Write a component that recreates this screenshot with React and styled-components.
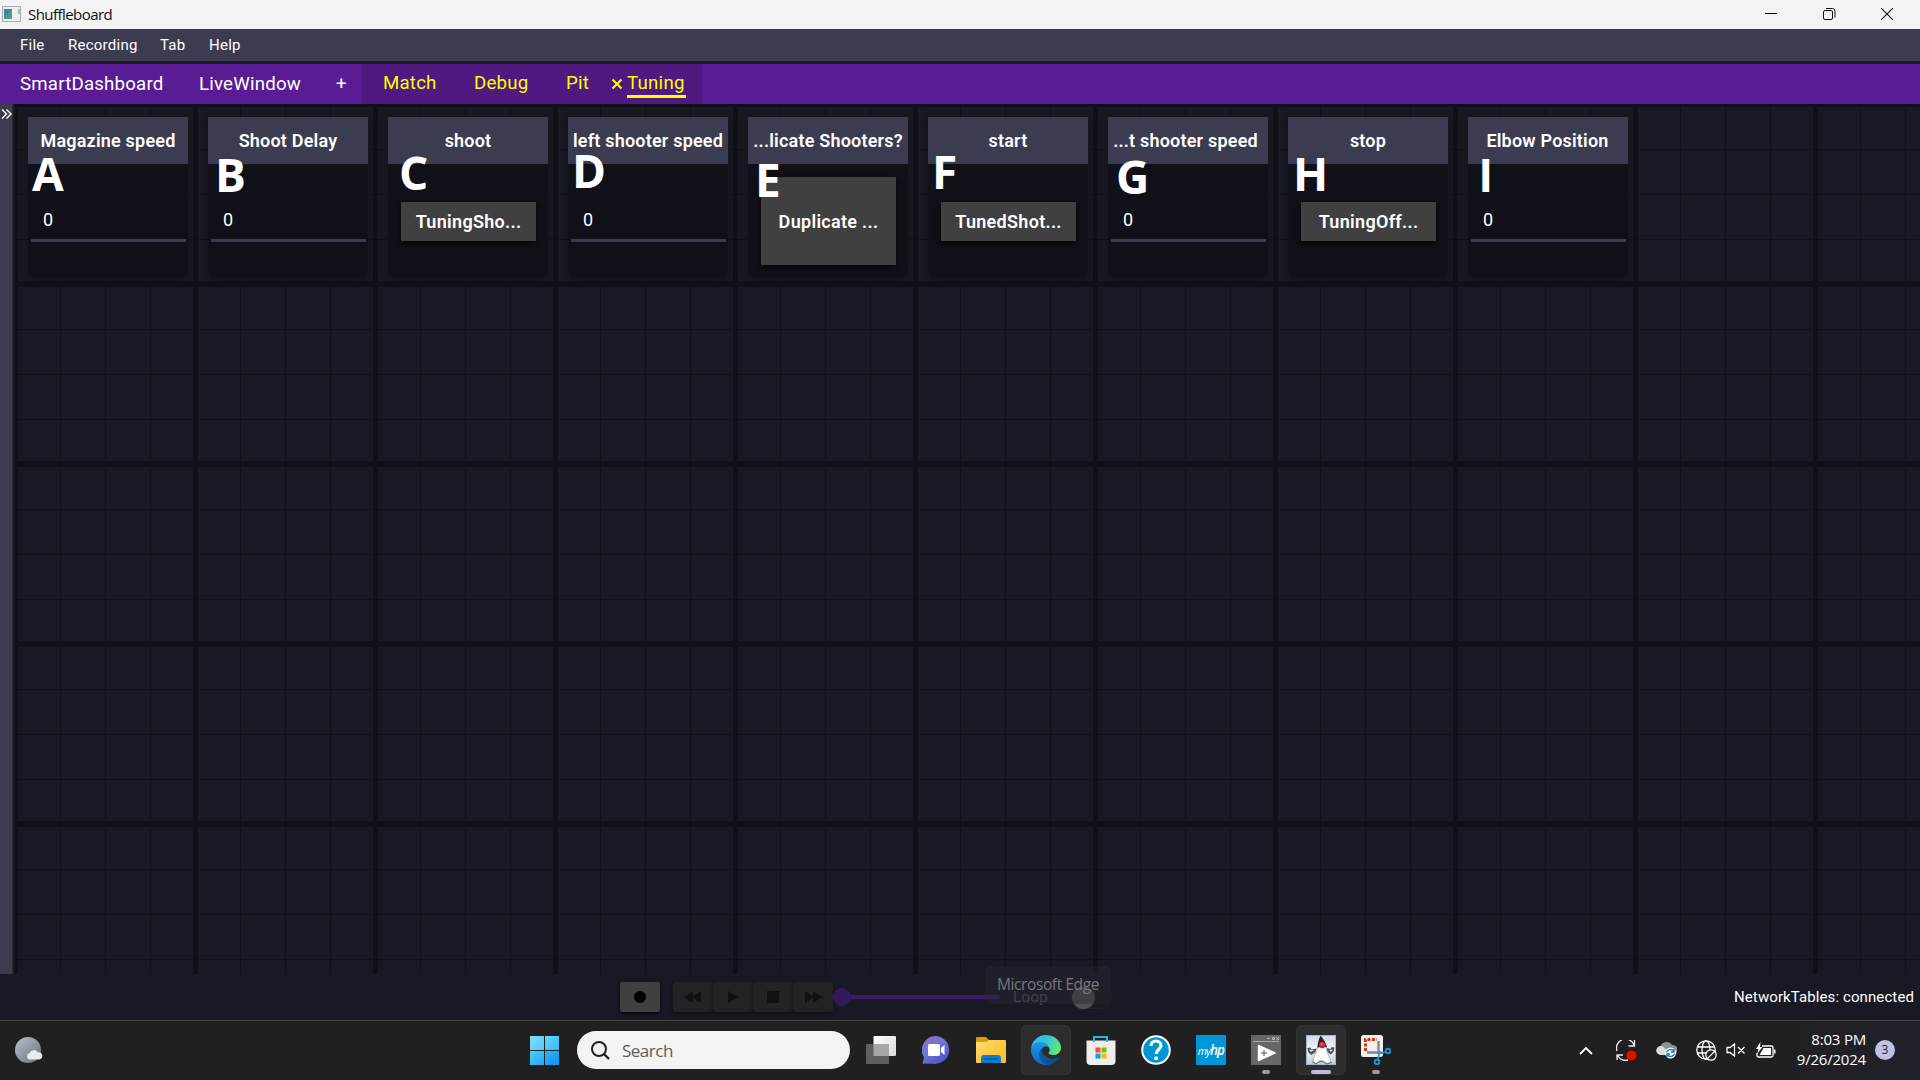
import React from 'react';
import styled, { createGlobalStyle } from 'styled-components';

const GlobalStyle = createGlobalStyle`
  * { box-sizing: border-box; }
  body { margin: 0; background: #191924; overflow: hidden; }
`;

const roboto = `Roboto, "Liberation Sans", sans-serif`;
const system = `"Open Sans", "Noto Sans", sans-serif`;

const Screen = styled.div`
  width: 1920px;
  height: 1080px;
  display: flex;
  flex-direction: column;
  overflow: hidden;
  background: #191924;
  color: #fff;
  font-family: ${roboto};
  white-space: nowrap;
`;

const TitleBar = styled.header`
  height: 29px;
  flex: none;
  display: flex;
  align-items: center;
  background: #f3f3f3;
  color: #111;
  padding: 0 4px 1px 2px;
`;
const WindowTitle = styled.span`
  flex: 1;
  margin-left: 7px;
  font: 15px/29px ${system};
  letter-spacing: -0.55px;
`;
const WindowButton = styled.span`
  width: 58px;
  height: 28px;
  display: grid;
  place-items: center;
`;

const MenuBar = styled.nav`
  height: 35px;
  flex: none;
  display: flex;
  gap: 24px;
  padding-left: 20px;
  background: #3c3c50;
  border-bottom: 3px solid #1c1b27;
`;
const MenuItem = styled.span`
  width: ${(p) => p.$w}px;
  font-size: 15px;
  line-height: 32px;
  letter-spacing: 0.25px;
`;

const TabBar = styled.nav`
  height: 40px;
  flex: none;
  display: flex;
  background: #591c94;
  font-size: 18.67px;
  line-height: 41px;
`;
const Tab = styled.span`
  width: ${(p) => p.$w}px;
  padding-left: ${(p) => p.$pad || 0}px;
  letter-spacing: 0.2px;
`;
const CustomTabs = styled.div`
  width: 340px;
  display: flex;
  background: #4f1980;
  color: #ff0;
  line-height: 39px;
`;
const CloseMark = styled.svg`
  margin: 14px 4px 0 0;
  flex: none;
`;
const ActiveTab = styled.span`
  height: 34px;
  width: 59px;
  border-bottom: 3px solid #ff0;
  letter-spacing: 0.25px;
`;

const Workspace = styled.main`
  height: 870px;
  flex: none;
  display: flex;
`;
const Sidebar = styled.aside`
  width: 15px;
  flex: none;
  background: #3c3c50;
  border-right: 2px solid #191924;
  box-shadow: inset -1px 0 #2b2a3a;
  padding: 4px 0 0 1px;
  svg { display: block; }
`;
const Board = styled.section`
  flex: 1;
  padding: 13px 0 0 13px;
  display: flex;
  align-items: flex-start;
  gap: 20px;
  border-top: 0;
  background:
    repeating-linear-gradient(90deg, #101018 0 3px, transparent 3px 178px, #101018 178px 180px),
    repeating-linear-gradient(180deg, #101018 0 3px, transparent 3px 177px, #101018 177px 180px),
    repeating-linear-gradient(90deg, transparent 0 45px, #111119 45px 46px, transparent 46px 90px, #111119 90px 91px, transparent 91px 135px, #111119 135px 136px, transparent 136px 180px),
    repeating-linear-gradient(180deg, transparent 0 45px, #111119 45px 46px, transparent 46px 90px, #111119 90px 91px, transparent 91px 135px, #111119 135px 136px, transparent 136px 180px),
    #191924;
`;

const Tile = styled.article`
  position: relative;
  width: 160px;
  height: 160px;
  flex: none;
  display: flex;
  flex-direction: column;
  border-radius: 0 0 6px 6px;
  background: #101018;
  box-shadow: 0 2px 6px rgba(16, 16, 18, 0.85);
`;
const TileTitle = styled.h2`
  margin: 0;
  height: 47px;
  padding-right: ${(p) => p.$shift || 0}px;
  background: #3c3c50;
  text-align: center;
  font-size: 18px;
  font-weight: 600;
  line-height: 47px;
  letter-spacing: 0.2px;
`;
const TileBody = styled.div`
  flex: 1;
  display: flex;
  padding: 13px 13px 12px;
  align-items: center;
`;
const NumberField = styled.div`
  width: 155px;
  height: 46px;
  align-self: flex-start;
  margin: 19px -11px 0 -10px;
  flex: none;
  padding: 10px 0 0 12px;
  border-bottom: 3px solid #3c3c50;
  font-size: 18px;
  line-height: 27px;
`;
const CommandButton = styled.button`
  width: 135px;
  height: ${(p) => (p.$tall ? 88 : 39)}px;
  margin-top: ${(p) => (p.$tall ? 0 : 1)}px;
  flex: none;
  padding: 1px 0 0;
  border: 0;
  background: #404040;
  color: #fff;
  box-shadow: 0 2px 6px rgba(0, 0, 0, 0.8);
  font: 600 18px/1 ${roboto};
  letter-spacing: 0.3px;
`;
const Marker = styled.span`
  position: absolute;
  left: ${(p) => p.$x}px;
  top: ${(p) => p.$y}px;
  font: 700 46px/50px ${(p) => (p.$plain ? roboto : system)};
`;

const PlaybackBar = styled.footer`
  height: 47px;
  flex: none;
  display: flex;
  align-items: center;
  padding: 0 6px 0 620px;
  border-bottom: 1px solid #48484c;
`;
const MediaButton = styled.span`
  width: 40px;
  height: 30px;
  display: grid;
  place-items: center;
  background: ${(p) => (p.$active ? '#404040' : '#222227')};
  margin-right: ${(p) => (p.$active ? 13 : 0)}px;
  border-radius: 2px;
  box-shadow: 0 2px 4px rgba(0, 0, 0, ${(p) => (p.$active ? 0.7 : 0.35)});
`;
const Timeline = styled.div`
  width: 167px;
  display: flex;
  align-items: center;
`;
const Knob = styled.i`
  width: 18px;
  height: 18px;
  border-radius: 50%;
  background: #34195a;
`;
const Track = styled.i`
  flex: 1;
  height: 4px;
  border-radius: 0 2px 2px 0;
  background: #3d1c67;
`;
const LoopArea = styled.div`
  position: relative;
  flex: 1;
  display: flex;
  align-items: center;
  padding-left: 13px;
`;
const LoopLabel = styled.span`
  width: 57px;
  color: #54545b;
  font-size: 15.5px;
`;
const Toggle = styled.i`
  width: 42px;
  height: 24px;
  border-radius: 12px;
  border: 1px solid #23232c;
  background: #191920;
  display: flex;
  align-items: center;
  padding-left: 1px;
  &::before {
    content: '';
    width: 23px;
    height: 23px;
    flex: none;
    border-radius: 50%;
    background: #505054;
  }
`;
const Tooltip = styled.span`
  position: absolute;
  left: -15px;
  top: -19px;
  width: 126px;
  height: 38px;
  border-radius: 5px;
  background: rgba(40, 40, 48, 0.45);
  color: #77777e;
  text-align: center;
  font: 15.5px/37px ${system};
  letter-spacing: -0.4px;
`;
const Status = styled.span`
  font-size: 15px;
  letter-spacing: 0.1px;
`;

const Taskbar = styled.footer`
  height: 59px;
  flex: none;
  display: flex;
  align-items: center;
  padding-bottom: 1px;
  background: linear-gradient(90deg, #202020 0 89%, #20202a);
  font-family: ${system};
`;
const Weather = styled.div`
  width: 515px;
  padding-left: 15px;
  display: flex;
`;
const Start = styled.div`
  width: 29px;
  height: 29px;
  margin: 0 18px 0 15px;
  display: grid;
  grid-template-columns: 14px 14px;
  grid-template-rows: 14px 14px;
  gap: 1px;
`;
const Pane = styled.i`
  background: linear-gradient(135deg, ${(p) => p.$from}, ${(p) => p.$to});
`;
const SearchBox = styled.div`
  width: 273px;
  height: 38px;
  border-radius: 19px;
  background: #f3f3f3;
  display: flex;
  align-items: center;
  padding-left: 14px;
  gap: 12px;
  color: #5c5c5c;
  font-size: 17px;
  letter-spacing: -0.5px;
`;
const Apps = styled.div`
  display: flex;
  gap: 5px;
  margin-left: 6px;
`;
const AppSlot = styled.div`
  position: relative;
  width: 50px;
  height: 50px;
  display: grid;
  place-items: center;
  border-radius: 6px;
  background: ${(p) => (p.$lit ? '#2d2d2d' : 'transparent')};
  box-shadow: ${(p) => (p.$lit ? 'inset 0 0 0 1px #323232' : 'none')};
`;
const Running = styled.i`
  position: absolute;
  bottom: 1px;
  left: ${(p) => 25 - p.$w / 2}px;
  width: ${(p) => p.$w}px;
  height: 4px;
  border-radius: 2px;
  background: ${(p) => p.$color};
`;
const HpTile = styled.span`
  width: 30px;
  height: 30px;
  background: #0096d6;
  border-radius: 1px;
  text-align: center;
  font: italic 10.5px/30px ${system};
  letter-spacing: -0.9px;
  b { font-size: 13.5px; font-weight: 600; }
`;
const Tray = styled.div`
  flex: 1;
  display: flex;
  align-items: center;
  justify-content: flex-end;
  padding-right: 25px;
`;
const TrayIcon = styled.svg`
  flex: none;
  margin-right: ${(p) => p.$gap}px;
`;
const Clock = styled.div`
  width: 80px;
  margin-right: 9px;
  padding-bottom: 2px;
  text-align: right;
  font-size: 15px;
  line-height: 20px;
  letter-spacing: -0.2px;
`;
const Count = styled.span`
  width: 20px;
  height: 20px;
  border-radius: 50%;
  background: #c0bfe4;
  color: #222;
  text-align: center;
  font-size: 12px;
  line-height: 20px;
`;

const tiles = [
  { title: 'Magazine speed', mark: 'A', x: 4, y: 31 },
  { title: 'Shoot Delay', mark: 'B', x: 7, y: 32 },
  { title: 'shoot', mark: 'C', x: 11, y: 30, command: 'TuningSho...' },
  { title: 'left shooter speed', mark: 'D', x: 4, y: 28 },
  { title: '...licate Shooters?', mark: 'E', x: 7, y: 37, command: 'Duplicate ...', tall: true },
  { title: 'start', mark: 'F', x: 4, y: 29, command: 'TunedShot...' },
  { title: '...t shooter speed', mark: 'G', x: 8, y: 34, shift: 5 },
  { title: 'stop', mark: 'H', x: 5, y: 31, command: 'TuningOff...' },
  { title: 'Elbow Position', mark: 'I', x: 11, y: 34, plain: true, shift: 1 },
];

const AppFileIcon = () => (
  <svg width="19" height="16" viewBox="0 0 19 16">
    <rect x=".5" y=".5" width="18" height="15" fill="#eee" stroke="#a9adaf" />
    <rect x="2" y="3" width="8" height="10" fill="#4b9b86" />
    <path d="M2 3h8L2 11z" fill="#417fa0" />
    <path d="M17 3v5" stroke="#4b9b86" />
  </svg>
);

const WeatherIcon = () => (
  <svg width="28" height="27" viewBox="0 0 28 27">
    <defs>
      <linearGradient id="moon" x2="1" y2="1"><stop stopColor="#b7c1cb" /><stop offset="1" stopColor="#69737d" /></linearGradient>
    </defs>
    <circle cx="13" cy="13" r="13" fill="url(#moon)" />
    <path d="M14.500 22.500a3.200 3.200 0 0 1 0-6.200 4.600 4.600 0 0 1 8.300-1 3.700 3.700 0 0 1 1.700 7.200z" fill="#e9edf0" />
  </svg>
);

const TaskViewIcon = () => (
  <svg width="30" height="28" viewBox="0 0 30 28">
    <defs><linearGradient id="tv" x2="1" y2="1"><stop stopColor="#fff" /><stop offset="1" stopColor="#d8d8d8" /></linearGradient></defs>
    <rect x="7.500" y="0" width="22.500" height="20" rx="1" fill="url(#tv)" />
    <rect x="0" y="8" width="23" height="20" rx="1" fill="#5f5f5f" />
    <path d="M7.500 8H23v12H7.500z" fill="#a6a6a6" />
  </svg>
);

const ChatIcon = () => (
  <svg width="28" height="28" viewBox="0 0 28 28">
    <defs><linearGradient id="chat" x2=".7" y2="1"><stop stopColor="#9a6aa8" /><stop offset=".45" stopColor="#7378d4" /><stop offset="1" stopColor="#4f52c8" /></linearGradient></defs>
    <path d="M14 0a14 14 0 1 1-3 27.800H0.400L2 21.500A14 14 0 0 1 14 0z" fill="url(#chat)" />
    <rect x="6" y="8" width="12" height="12" rx="1.500" fill="#fff" />
    <path d="M19 12l3.500-3v10L19 16z" fill="#fff" />
  </svg>
);

const FolderIcon = () => (
  <svg width="30" height="28" viewBox="0 0 30 28">
    <defs><linearGradient id="fold" x2="1" y2="1"><stop stopColor="#ffdd70" /><stop offset="1" stopColor="#fbb91d" /></linearGradient></defs>
    <path d="M0 2a1 1 0 0 1 1-1h9l3 3h16v6H0z" fill="#d99a08" />
    <path d="M0 6h10l3-2h16a1 1 0 0 1 1 1v21a1 1 0 0 1-1 1H1a1 1 0 0 1-1-1z" fill="url(#fold)" />
    <path d="M5 27v-5a3 3 0 0 1 3-3h14a3 3 0 0 1 3 3v5z" fill="#0f7ad0" />
    <path d="M8.500 23h13" stroke="#094c8d" strokeWidth="1.200" />
  </svg>
);

const EdgeIcon = () => (
  <svg width="30" height="30" viewBox="0 0 256 256">
    <defs>
      <linearGradient id="e1" x1="0" x2="1" y1=".5" y2=".5"><stop stopColor="#0c59a4" /><stop offset="1" stopColor="#114a8b" /></linearGradient>
      <linearGradient id="e2" x1=".5" x2=".4" y1="0" y2="1"><stop stopColor="#1b9de2" /><stop offset="1" stopColor="#0a6bd0" /></linearGradient>
      <linearGradient id="e3" x1="0" x2="1" y1=".3" y2=".6"><stop stopColor="#35b6ef" /><stop offset=".5" stopColor="#37c6cf" /><stop offset="1" stopColor="#66eb6e" /></linearGradient>
    </defs>
    <path fill="url(#e1)" d="M231 190.500c-3.400 1.800-6.900 3.400-10.500 4.700a101.900 101.900 0 0 1-35.900 6.400c-47.300 0-88.500-32.500-88.500-74.300a31.500 31.500 0 0 1 16.400-27.300c-42.800 1.800-53.800 46.400-53.800 72.500 0 73.900 68.100 81.400 82.800 81.400 7.900 0 19.800-2.300 27-4.600l1.300-.4a128.300 128.300 0 0 0 66.600-52.800 4 4 0 0 0-5.400-5.600z" />
    <path fill="url(#e2)" d="M105.700 241.400a79.200 79.200 0 0 1-22.700-21.300 80.700 80.700 0 0 1 29.500-120c3.200-1.500 8.500-4.200 15.600-4.100a32.400 32.400 0 0 1 25.700 13 31.900 31.900 0 0 1 6.300 18.700c0-.2 24.500-79.600-80-79.600-43.900 0-80 41.700-80 78.200a130.200 130.200 0 0 0 12.100 56 128 128 0 0 0 156.400 67 75.500 75.500 0 0 1-62.800-8z" />
    <path fill="url(#e3)" d="M152.300 148.900c-.8 1-3.300 2.500-3.300 5.700 0 2.600 1.700 5.100 4.700 7.200 14.400 10 41.500 8.700 41.600 8.700a59.600 59.600 0 0 0 30.300-8.300 61.400 61.400 0 0 0 30.400-52.900c.3-22.400-8-37.300-11.300-43.900C223.500 23.900 177.700 0 128 0A128 128 0 0 0 0 126.200c.5-36.500 36.800-66 80-66 3.500 0 23.500.3 42 10a72.600 72.600 0 0 1 30.900 29.300c6.100 10.600 7.200 24.100 7.200 29.500s-2.700 13.300-7.800 19.900z" />
  </svg>
);

const StoreIcon = () => (
  <svg width="30" height="30" viewBox="0 0 30 30">
    <path d="M8 7V2h13v5" fill="none" stroke="#28b4f4" strokeWidth="2" />
    <path d="M.5 5.500h29V26a4 4 0 0 1-4 4h-21a4 4 0 0 1-4-4z" fill="#ededed" />
    <path d="M8 7V2h13v5" fill="none" stroke="#28b4f4" strokeWidth="2" />
    <path d="M9.500 12.500h5v5h-5z" fill="#f35325" /><path d="M15.500 12.500h5v5h-5z" fill="#81bc06" />
    <path d="M9.500 18.500h5v5h-5z" fill="#05a6f0" /><path d="M15.500 18.500h5v5h-5z" fill="#ffba08" />
  </svg>
);

const HelpIcon = () => (
  <svg width="30" height="30" viewBox="0 0 30 30">
    <circle cx="15" cy="15" r="13.800" fill="#0096d6" stroke="#fff" strokeWidth="2" />
    <path d="M10 11c0-3 2.200-5 5-5s5 2 5 4.600c0 3.600-4.700 3.900-4.700 8.400" fill="none" stroke="#fff" strokeWidth="3.200" />
    <circle cx="15.200" cy="23.300" r="2" fill="#fff" />
  </svg>
);

const PlayerIcon = () => (
  <svg width="30" height="30" viewBox="0 0 30 30">
    <path d="M0 0h30v30H0z" fill="#666867" />
    <path d="M2 6.500h26" stroke="#aaa" />
    <path d="M16 3.500h3M21.500 2.500h2v2h-2zM25.500 2l2.500 3M28 2l-2.500 3" stroke="#ccc" strokeWidth=".8" fill="none" />
    <path d="M7.500 10.500v15L24 18z" fill="#fff" stroke="#fff" strokeWidth="1.500" strokeLinejoin="round" />
    <path d="M13 15v6M10 18h6" stroke="#555" />
  </svg>
);

const DukeIcon = () => (
  <svg width="30" height="30" viewBox="0 0 30 30">
    <defs><linearGradient id="duke" x2="0" y2="1"><stop stopColor="#d3dae6" /><stop offset=".5" stopColor="#f2f3f5" /><stop offset="1" stopColor="#c9cbd0" /></linearGradient></defs>
    <path d="M0 0h30v30H0z" fill="url(#duke)" />
    <path d="M.5 .5h29v29H.5z" fill="none" stroke="#9db6d2" />
    <path d="M1.500 13l3-.5 1 2 5-1-1 3.500-4 3c-2-1-4-3-4-7zM28.500 12.500l-3-.5-1 2-4-1 1 4 3 2.500c2-1 4-3 4-7z" fill="#50545c" />
    <path d="M3 14.500l5 .5-3 2zM27 14.500l-4 .5 2 2z" fill="#d0d2d4" />
    <path d="M11.500 12c-.5 5-4 9-4.500 14l3 2.500 4-3 3 .5 4 2.500 4-1.500c-1.500-5-4-9-5-15z" fill="#fafaf8" stroke="#8b8d90" strokeWidth=".6" />
    <path d="M6 27l4 1.800 4-2.300 3 .3 4 2.200 5-1.500" stroke="#6c6f74" fill="none" />
    <path d="M14.500 .8c2.200 2 5.500 6.500 6.500 11.700-2.500-1.500-6.500-1.300-9.500.3 0-4 1.200-9 3-12z" fill="#25252b" />
    <circle cx="16.200" cy="10" r="3.200" fill="#cf2b2c" />
    <circle cx="15.500" cy="9" r="1" fill="#f07070" />
  </svg>
);

const SnipIcon = () => (
  <svg width="30" height="30" viewBox="0 0 30 30">
    <rect width="22" height="22" rx="2.500" fill="#f0f0f0" />
    <path d="M4.500 16V4.500H16" fill="none" stroke="#d13b13" strokeWidth="3" strokeDasharray="3 1.500" />
    <path d="M17.500 6v13M6 17.500h15" stroke="#7e8890" strokeWidth="2.400" />
    <circle cx="27" cy="16" r="2.300" fill="none" stroke="#1b94dc" strokeWidth="1.900" />
    <circle cx="16" cy="27" r="2.300" fill="none" stroke="#1b94dc" strokeWidth="1.900" />
    <path d="M19 18.500l6-1.500M18 19l-1 6" stroke="#1b94dc" strokeWidth="1.700" />
  </svg>
);

export default function App() {
  return (
    <Screen>
      <GlobalStyle />
      <TitleBar>
        <AppFileIcon />
        <WindowTitle>Shuffleboard</WindowTitle>
        <WindowButton><svg width="12" height="12"><path d="M0 5.500h12" stroke="#000" /></svg></WindowButton>
        <WindowButton>
          <svg width="13" height="13" fill="none" stroke="#111">
            <rect x=".5" y="2.500" width="9" height="9" rx="1.500" /><path d="M3 .5h6.500a2.500 2.500 0 0 1 2.500 2.500v6.500" />
          </svg>
        </WindowButton>
        <WindowButton><svg width="12" height="12"><path d="M0 0l12 12M12 0L0 12" stroke="#111" strokeWidth="1.100" /></svg></WindowButton>
      </TitleBar>

      <MenuBar>
        <MenuItem $w={24}>File</MenuItem>
        <MenuItem $w={68}>Recording</MenuItem>
        <MenuItem $w={25}>Tab</MenuItem>
        <MenuItem $w={40}>Help</MenuItem>
      </MenuBar>

      <TabBar>
        <Tab $w={199} $pad={20}>SmartDashboard</Tab>
        <Tab $w={137}>LiveWindow</Tab>
        <Tab $w={26}>+</Tab>
        <CustomTabs>
          <Tab $w={112} $pad={21}>Match</Tab>
          <Tab $w={92}>Debug</Tab>
          <Tab $w={45}>Pit</Tab>
          <CloseMark width="12" height="12"><path d="M1.500 1.500l9 9M10.500 1.500l-9 9" stroke="#ff0" strokeWidth="2" /></CloseMark>
          <ActiveTab>Tuning</ActiveTab>
        </CustomTabs>
      </TabBar>

      <Workspace>
        <Sidebar>
          <svg width="11" height="12" fill="none" stroke="#fff" strokeWidth="1.400"><path d="M1 1.500L5.500 6 1 10.500M5.500 1.500L10 6l-4.500 4.500" /></svg>
        </Sidebar>
        <Board>
          {tiles.map((t) => (
            <Tile key={t.mark}>
              <TileTitle $shift={t.shift}>{t.title}</TileTitle>
              <TileBody>
                {t.command ? <CommandButton $tall={t.tall}>{t.command}</CommandButton> : <NumberField>0</NumberField>}
              </TileBody>
              <Marker $x={t.x} $y={t.y} $plain={t.plain}>{t.mark}</Marker>
            </Tile>
          ))}
        </Board>
      </Workspace>

      <PlaybackBar>
        <MediaButton $active><svg width="14" height="14"><circle cx="7" cy="7" r="6" fill="#000" /></svg></MediaButton>
        <MediaButton><svg width="18" height="14" fill="#111114"><path d="M9 1v12L0 7zM17 1v12L8 7z" /></svg></MediaButton>
        <MediaButton><svg width="12" height="14" fill="#111114"><path d="M1 1v12l10-6z" /></svg></MediaButton>
        <MediaButton><svg width="12" height="12"><path d="M0 0h12v12H0z" fill="#111114" /></svg></MediaButton>
        <MediaButton><svg width="18" height="14" fill="#111114"><path d="M1 1v12l9-6zM9 1v12l9-6z" /></svg></MediaButton>
        <Timeline><Knob /><Track /></Timeline>
        <LoopArea>
          <LoopLabel>Loop</LoopLabel>
          <Toggle />
          <Tooltip>Microsoft Edge</Tooltip>
        </LoopArea>
        <Status>NetworkTables: connected</Status>
      </PlaybackBar>

      <Taskbar>
        <Weather><WeatherIcon /></Weather>
        <Start>
          <Pane $from="#83dcfb" $to="#56c8f8" /><Pane $from="#62d9fd" $to="#35b8f8" />
          <Pane $from="#4ccafc" $to="#25a9f5" /><Pane $from="#30b6fb" $to="#0c92f4" />
        </Start>
        <SearchBox>
          <svg width="19" height="19" fill="none" stroke="#222" strokeWidth="2"><circle cx="8" cy="8" r="7" /><path d="M13 13l5 5" strokeWidth="2.400" /></svg>
          Search
        </SearchBox>
        <Apps>
          <AppSlot><TaskViewIcon /></AppSlot>
          <AppSlot><ChatIcon /></AppSlot>
          <AppSlot><FolderIcon /></AppSlot>
          <AppSlot $lit><EdgeIcon /></AppSlot>
          <AppSlot><StoreIcon /></AppSlot>
          <AppSlot><HelpIcon /></AppSlot>
          <AppSlot><HpTile>my<b>hp</b></HpTile></AppSlot>
          <AppSlot><PlayerIcon /><Running $w={8} $color="#9a9a9a" /></AppSlot>
          <AppSlot $lit><DukeIcon /><Running $w={20} $color="#bdbde3" /></AppSlot>
          <AppSlot><SnipIcon /><Running $w={8} $color="#9a9a9a" /></AppSlot>
        </Apps>
        <Tray>
          <TrayIcon $gap={23} width="14" height="9" fill="none" stroke="#fff" strokeWidth="1.800"><path d="M1 8l6-6 6 6" /></TrayIcon>
          <TrayIcon $gap={19} width="21" height="21" fill="none" stroke="#eee" strokeWidth="1.300">
            <path d="M1 11A9 9 0 0 1 18 5M18.500 0v6h-6M1 20v-5h6M2 16a9 9 0 0 0 10 4" /><circle cx="15.500" cy="15.500" r="5" fill="#f00" stroke="none" />
          </TrayIcon>
          <TrayIcon $gap={19} width="21" height="18">
            <path d="M5 14a4.500 4.500 0 0 1-.5-9A6.500 6.500 0 0 1 16 4a5 5 0 0 1 1 10z" fill="#909090" />
            <path d="M5 14a4.500 4.500 0 1 1 2-8.500L15 14z" fill="#ddd" />
            <circle cx="14.500" cy="12" r="5.500" fill="#fff" />
            <path d="M10.500 11.500a4 4 0 0 1 7-1.500M18 8v3h-3M18.500 12.500a4 4 0 0 1-7 1.500M11 16v-3h3" fill="none" stroke="#1478cc" strokeWidth="1.300" />
          </TrayIcon>
          <TrayIcon $gap={9} width="21" height="21" fill="none" stroke="#fff" strokeWidth="1.300">
            <circle cx="10" cy="10" r="9.200" /><ellipse cx="10" cy="10" rx="4" ry="9.200" /><path d="M1.500 7h17M1.500 13h9" />
            <circle cx="15" cy="15" r="5.200" fill="#202020" /><path d="M11.500 18.500l7-7" />
          </TrayIcon>
          <TrayIcon $gap={11} width="19" height="14" fill="none" stroke="#fff" strokeWidth="1.300">
            <path d="M1 4.500h3L8.500 1v12L4 9.500H1zM12 4l6.500 6.500M18.500 4L12 10.500" />
          </TrayIcon>
          <TrayIcon $gap={10} width="20" height="17" fill="none" stroke="#fff" strokeWidth="1.300">
            <path d="M6 4h9.500a1.500 1.500 0 0 1 1.500 1.500v8a1.500 1.500 0 0 1-1.500 1.500h-13A1.500 1.500 0 0 1 1 13.500V11" />
            <path d="M7.500 6h7.500v7H3.500z" fill="#fff" stroke="none" /><path d="M18 7.500h1.500v4H18z" fill="#fff" stroke="none" />
            <path d="M4.500 0L0 7h2.500L1 12l5.500-7H4z" fill="#fff" stroke="none" />
          </TrayIcon>
          <Clock>8:03 PM<br />9/26/2024</Clock>
          <Count>3</Count>
        </Tray>
      </Taskbar>
    </Screen>
  );
}
